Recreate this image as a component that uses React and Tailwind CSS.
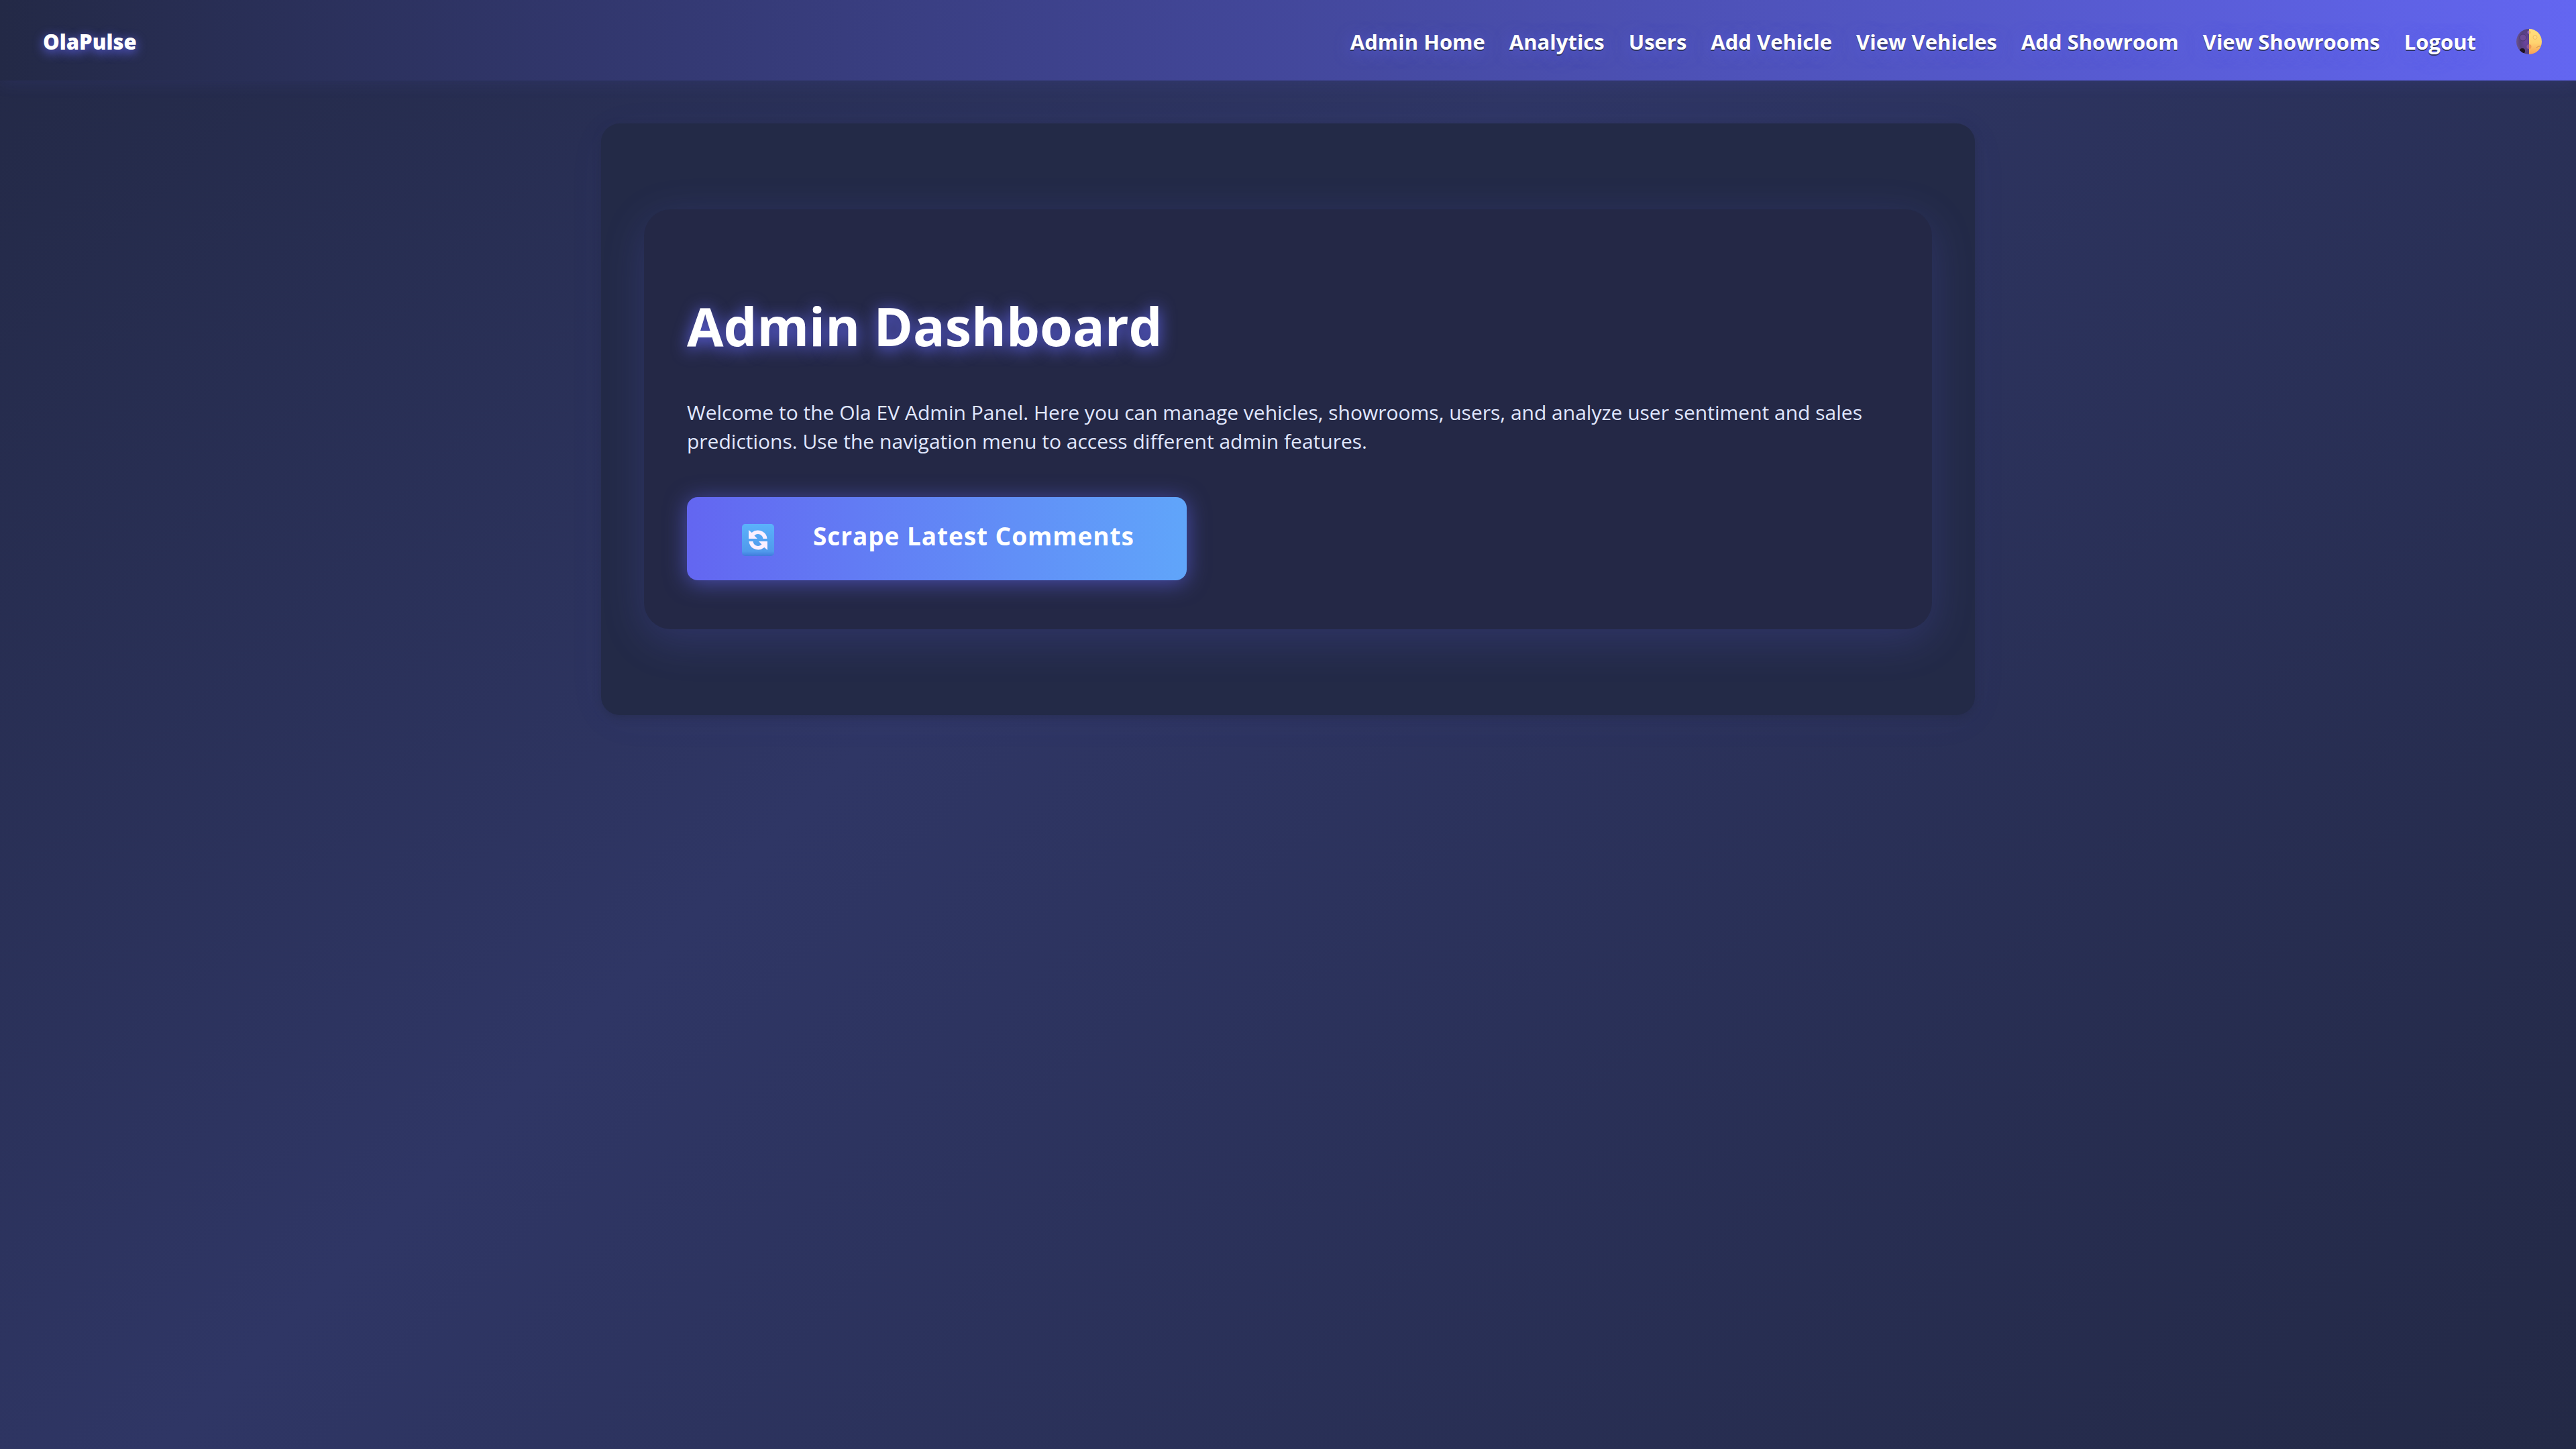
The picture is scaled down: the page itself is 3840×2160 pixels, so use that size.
const links = [
  "Admin Home",
  "Analytics",
  "Users",
  "Add Vehicle",
  "View Vehicles",
  "Add Showroom",
  "View Showrooms",
  "Logout",
];

function MoonIcon() {
  return (
    <svg viewBox="0 0 38 38" className="size-[38px]" aria-hidden="true">
      <defs>
        <linearGradient id="moonLight" x1="0" y1="0" x2="0" y2="1">
          <stop offset="0" stopColor="#ffdf7d" />
          <stop offset="0.55" stopColor="#ffd36f" />
          <stop offset="1" stopColor="#f8a055" />
        </linearGradient>
        <radialGradient id="moonDark" cx="0.75" cy="0.5" r="0.75">
          <stop offset="0" stopColor="#6c44a0" />
          <stop offset="0.6" stopColor="#56407f" />
          <stop offset="1" stopColor="#6b5590" />
        </radialGradient>
        <clipPath id="moonClip">
          <circle cx="19" cy="19" r="19" />
        </clipPath>
      </defs>
      <g clipPath="url(#moonClip)">
        <rect width="19" height="38" fill="url(#moonDark)" />
        <rect x="19" width="19" height="38" fill="url(#moonLight)" />
        <circle cx="10" cy="13" r="5" fill="#6d4a98" stroke="#4d3873" />
        <circle cx="9" cy="33" r="4" fill="#1e1220" />
        <path d="M19 2.500a2.500 2.500 0 0 0 0 5z" fill="#9a6cb8" />
        <path d="M19 2.500a2.500 2.500 0 0 1 0 5z" fill="#f3b968" />
        <path d="M19 23a3.500 3.500 0 0 0 0 7z" fill="#8f5a9c" />
        <path d="M19 23a3.500 3.500 0 0 1 0 7z" fill="#f09a55" />
        <circle cx="28" cy="12.500" r="3" fill="#ffdc80" stroke="#f0bb60" />
        <path d="M30 28q3-3 7-2" fill="none" stroke="#d08f45" />
      </g>
    </svg>
  );
}

function RefreshIcon() {
  return (
    <svg viewBox="0 0 48 48" className="size-12" aria-hidden="true">
      <defs>
        <linearGradient id="tile" x1="0" y1="0" x2="0" y2="1">
          <stop offset="0" stopColor="#5bb2fb" />
          <stop offset="0.85" stopColor="#509aec" />
          <stop offset="1" stopColor="#4079dc" />
        </linearGradient>
      </defs>
      <rect width="48" height="48" rx="5" fill="url(#tile)" />
      <path d="M10 9v13h13l-4.500-4.500q4-4 9-1.500q3.500 2 4 6h6q-.5-7-6.500-10.500q-9-4.500-16.500 1.500z" fill="#fbf0ff" />
      <path d="M38 39v-13h-13l4.500 4.500q-4 4-9 1.500q-3.500-2-4-6h-6q.5 7 6.500 10.500q9 4.500 16.500-1.500z" fill="#fbf0ff" />
    </svg>
  );
}

export default function App() {
  return (
    <div className="min-h-screen bg-[linear-gradient(135deg,#232946_0%,#2f3665_40%,#232946_100%)] font-['Open_Sans','Noto_Sans',sans-serif] text-[30px] text-[#e0e7ff]">
      <header className="flex h-[120px] items-center justify-between bg-[linear-gradient(90deg,#232946_0%,#6366f1_100%)] pl-16 pr-[51px] pt-1 text-[31px] text-white shadow-[0_4px_24px_rgba(99,102,241,0.1)]">
        <a href="#home" className="font-extrabold [text-shadow:0_4px_16px_#6366f1]">
          OlaPulse
        </a>
        <div className="flex items-center gap-[60px]">
          <nav className="flex items-center gap-9">
            {links.map((label) => (
              <a
                key={label}
                href={"#" + label.toLowerCase().replace(" ", "-")}
                className="whitespace-nowrap font-bold [text-shadow:0_2px_0_#232946cc,0_4px_24px_#6366f1aa]"
              >
                {label}
              </a>
            ))}
          </nav>
          <button type="button" aria-label="Toggle theme">
            <MoonIcon />
          </button>
        </div>
      </header>
      <div className="px-16 py-16">
        <main className="mx-auto max-w-[2048px] rounded-[28px] bg-[#232a47] px-16 py-32 shadow-[0_4px_12px_rgba(35,41,70,0.5),0_8px_64px_rgba(99,102,241,0.04)]">
          <section className="rounded-[40px] bg-[#242846] px-16 pb-[73px] pt-[119px] shadow-[0_16px_64px_rgba(99,102,241,0.2)]">
            <h1 className="text-[79px] font-bold leading-[110px] text-white [text-shadow:0_4px_24px_#6366f1]">
              Admin Dashboard
            </h1>
            <p className="mt-[52px] leading-[43px]">
              Welcome to the Ola EV Admin Panel. Here you can manage vehicles, showrooms, users, and
              analyze user sentiment and sales predictions. Use the navigation menu to access
              different admin features.
            </p>
            <button
              type="button"
              className="mt-[62px] flex h-[124px] items-center gap-[58px] rounded-2xl bg-[linear-gradient(90deg,#6366f1_0%,#60a5fa_100%)] pl-[82px] pr-[78px] pt-1 text-[37px] font-bold tracking-wide text-white shadow-[0_4px_32px_rgba(99,102,241,0.6)]"
            >
              <RefreshIcon />
              <span className="pb-3">Scrape Latest Comments</span>
            </button>
          </section>
        </main>
      </div>
    </div>
  );
}
